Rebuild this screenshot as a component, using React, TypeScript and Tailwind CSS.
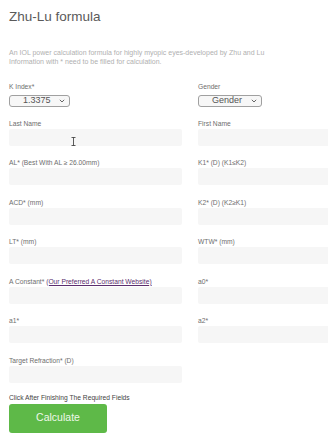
import React from 'react';

function Field({ label, children }: { label: React.ReactNode; children?: React.ReactNode }) {
  return (
    <div className="mb-[12.5px]">
      <div className="h-[10px] text-[6.7px] leading-[10px] text-[#6e6e6e] whitespace-nowrap">{label}</div>
      <div className="relative h-[17px] w-[173px] rounded-[2px] bg-[#f6f6f6]">{children}</div>
    </div>
  );
}

function Select({ value, width }: { value: string; width: string }) {
  return (
    <div
      className={`mt-[3.5px] flex h-[11.5px] items-center justify-between rounded-[3px] border border-[#a0a0a0] bg-[#f7f7f7] pl-[13px] pr-[4px] ${width}`}
    >
      <span className="text-[9px] leading-none text-[#555]">{value}</span>
      <svg width="6" height="4" viewBox="0 0 6 4" fill="none">
        <path d="M0.8 0.8 L3 3 L5.2 0.8" stroke="#555" strokeWidth="0.9" />
      </svg>
    </div>
  );
}

export default function App() {
  return (
    <div className="h-[445px] w-[328px] overflow-hidden bg-white px-[9px] pt-[9px] font-['Liberation_Sans',Arial,sans-serif]">
      <h1 className="text-[13.5px] leading-[16px] text-[#5a5a5a]">Zhu-Lu formula</h1>

      <p className="mt-[22.5px] text-[7px] leading-[9px] text-[#b0b0b0] whitespace-nowrap">
        An IOL power calculation formula for highly myopic eyes-developed by Zhu and Lu
        <br />
        Information with * need to be filled for calculation.
      </p>

      <div className="mt-[16px] grid grid-cols-[173px_173px] gap-x-[16px]">
        <div className="mb-[12px]">
          <div className="h-[10px] text-[6.7px] leading-[10px] text-[#6e6e6e]">K Index*</div>
          <Select value="1.3375" width="w-[61px]" />
        </div>
        <div className="mb-[12px]">
          <div className="h-[10px] text-[6.7px] leading-[10px] text-[#6e6e6e]">Gender</div>
          <Select value="Gender" width="w-[64px]" />
        </div>

        <Field label="Last Name">
          <svg className="absolute left-[62px] top-[8px]" width="5" height="9" viewBox="0 0 5 9" fill="none">
            <path d="M0.5 0.5 H4.5 M2.5 0.5 V8.5 M0.5 8.5 H4.5" stroke="#333" strokeWidth="0.8" />
          </svg>
        </Field>
        <Field label="First Name" />

        <Field label="AL* (Best With AL ≥ 26.00mm)" />
        <Field label="K1* (D) (K1≤K2)" />

        <Field label="ACD* (mm)" />
        <Field label="K2* (D) (K2≥K1)" />

        <Field label="LT* (mm)" />
        <Field label="WTW* (mm)" />

        <Field
          label={
            <>
              A Constant* <a className="text-[#5b2e6e] underline">(Our Preferred A Constant Website)</a>
            </>
          }
        />
        <Field label="a0*" />

        <Field label="a1*" />
        <Field label="a2*" />

        <Field label="Target Refraction* (D)" />
      </div>

      <div className="-mt-[2.5px] h-[10px] text-[6.7px] leading-[10px] text-[#444]">
        Click After Finishing The Required Fields
      </div>
      <button className="mt-[1px] flex h-[29px] w-[98px] items-center justify-center rounded-[3px] bg-[#5eb948] text-[10.5px] text-[#eef8ea]">
        Calculate
      </button>
    </div>
  );
}
